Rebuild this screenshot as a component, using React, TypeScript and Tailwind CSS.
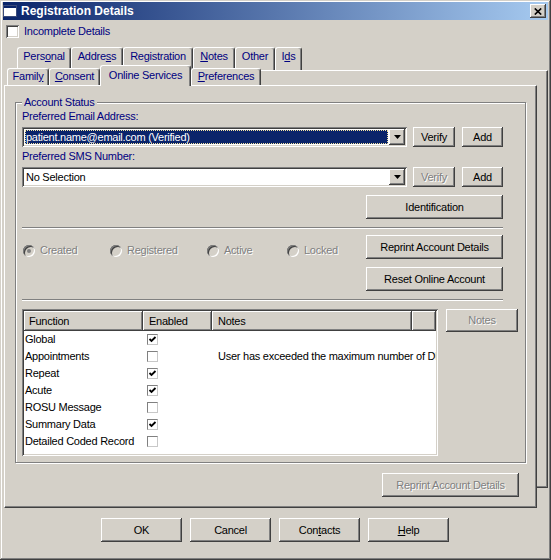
import React from 'react';

// classic 3D edges
const raised =
  'bg-[#d4d0c8] shadow-[inset_-1px_-1px_#404040,inset_1px_1px_#ffffff,inset_-2px_-2px_#808080,inset_2px_2px_#d4d0c8]';
const sunken =
  'shadow-[inset_1px_1px_#808080,inset_-1px_-1px_#ffffff,inset_2px_2px_#404040,inset_-2px_-2px_#d4d0c8]';
const greyed = 'text-[#808080] [text-shadow:1px_1px_0_#ffffff]';
const navy = 'text-[#000080]';

interface BtnProps {
  className?: string;
  disabled?: boolean;
  children: React.ReactNode;
}

const Btn: React.FC<BtnProps> = ({ className = '', disabled = false, children }) => (
  <button
    type="button"
    className={`${raised} ${disabled ? greyed : 'text-black'} flex shrink-0 items-center justify-center text-[11px] leading-[13px] tracking-[-0.25px] ${className}`}
  >
    {children}
  </button>
);

const Arrow = () => (
  <svg width="7" height="4" viewBox="0 0 7 4">
    <path d="M0 0H7L3.5 4Z" fill="#000000" />
  </svg>
);

const Combo: React.FC<{ text: string; selected?: boolean }> = ({ text, selected }) => (
  <div className={`${sunken} bg-white w-[385px] h-[20px] p-[2px] flex shrink-0`}>
    <div className="flex-1 min-w-0 p-[1px]">
      {selected ? (
        <div className="h-full bg-[#0a246a] text-white outline-1 outline-dotted outline-[#f3e3a0] -outline-offset-1 pl-[1px] leading-[14px] whitespace-nowrap overflow-hidden">
          {text}
        </div>
      ) : (
        <div className="h-full text-black pl-[1px] leading-[14px] whitespace-nowrap">{text}</div>
      )}
    </div>
    <div className={`${raised} w-[16px] h-full flex items-center justify-center`}>
      <Arrow />
    </div>
  </div>
);

const Radio: React.FC<{ label: string; checked?: boolean; className: string }> = ({ label, checked, className }) => (
  <div className={`flex items-center h-[13px] shrink-0 ${className}`}>
    <div className="w-[12px] h-[12px] rounded-full bg-[#d4d0c8] shadow-[inset_1px_1px_#808080,inset_-1px_-1px_#ffffff,inset_2px_2px_#404040,inset_-2px_-2px_#d4d0c8] flex items-center justify-center shrink-0">
      {checked && <div className="w-[4px] h-[4px] rounded-full bg-[#808080]" />}
    </div>
    <span className={`ml-[5px] ${greyed}`}>{label}</span>
  </div>
);

const Separator = ({ className = '' }: { className?: string }) => (
  <div className={`h-[2px] border-t border-[#808080] border-b border-b-white ${className}`} />
);

const Tick = () => (
  <svg width="9" height="9" viewBox="0 0 9 9">
    <path d="M1.5 4 L3.5 6 L7.5 2" fill="none" stroke="#000000" strokeWidth="1.8" />
  </svg>
);

const rows: { name: string; on: boolean; note?: string }[] = [
  { name: 'Global', on: true },
  { name: 'Appointments', on: false, note: 'User has exceeded the maximum number of DNAs' },
  { name: 'Repeat', on: true },
  { name: 'Acute', on: true },
  { name: 'ROSU Message', on: false },
  { name: 'Summary Data', on: true },
  { name: 'Detailed Coded Record', on: false },
];

const tabBase =
  'flex justify-center rounded-t-[3px] border-t border-l border-white border-r border-r-[#404040] shadow-[inset_-1px_0_#808080] bg-[#d4d0c8] shrink-0';

export default function App() {
  return (
    <div className="relative w-[551px] h-[560px] overflow-hidden bg-[#d4d0c8] font-['Liberation_Sans',Arial,sans-serif] text-[11px] leading-[13px] tracking-[-0.25px] shadow-[inset_-1px_-1px_#404040,inset_1px_1px_#d4d0c8,inset_-2px_-2px_#808080,inset_2px_2px_#ffffff]">
      {/* Title bar */}
      <div className="mx-[3px] mt-[2px] h-[18px] flex items-center pr-[2px] bg-[linear-gradient(to_right,#0a246a,#a6caf0)]">
        <svg width="14" height="12" viewBox="0 0 14 12" className="shrink-0">
          <rect x="0" y="0" width="14" height="12" fill="#ffffff" />
          <rect x="0" y="0" width="14" height="3" fill="#0a246a" />
          <rect x="0.5" y="0.5" width="13" height="11" fill="none" stroke="#3a4a7a" />
        </svg>
        <span className="ml-[4px] text-white font-bold text-[12px] tracking-normal">Registration Details</span>
        <div className={`${raised} ml-auto w-[16px] h-[14px] flex items-center justify-center`}>
          <svg width="8" height="7" viewBox="0 0 8 7">
            <path d="M0.8 0.5 L7.2 6.5 M7.2 0.5 L0.8 6.5" stroke="#000000" strokeWidth="1.7" />
          </svg>
        </div>
      </div>

      {/* Incomplete details */}
      <div className="mt-[5px] ml-[6px] h-[13px] flex items-center">
        <div className={`${sunken} bg-white w-[13px] h-[13px]`} />
        <span className={`ml-[5px] ${navy}`}>Incomplete Details</span>
      </div>

      {/* Tab control */}
      <div className="relative mt-[9px]">
        {/* panel of the back tab row, mostly hidden */}
        <div className="absolute left-[8px] right-[3px] top-[23px] h-[418px] border border-t-white border-l-white border-r-[#404040] border-b-[#404040] shadow-[inset_-1px_-1px_#808080]" />

        <div className="flex ml-[17px] h-[23px]">
          <div className={`${tabBase} w-[54px] pt-[2px] ${navy}`}>Pers<span className="underline">o</span>nal</div>
          <div className={`${tabBase} w-[52px] pt-[2px] ${navy}`}>Addre<span className="underline">s</span>s</div>
          <div className={`${tabBase} w-[70px] pt-[2px] ${navy}`}>Registration</div>
          <div className={`${tabBase} w-[42px] pt-[2px] ${navy}`}><span className="underline">N</span>otes</div>
          <div className={`${tabBase} w-[40px] pt-[2px] ${navy}`}>Other</div>
          <div className={`${tabBase} w-[27px] pt-[2px] ${navy}`}>I<span className="underline">d</span>s</div>
        </div>

        <div className="relative z-20 flex items-end ml-[7px] -mt-[2px] h-[17px]">
          <div className={`${tabBase} w-[42px] h-[17px] pt-[1px] ${navy}`}>Famil<span className="underline">y</span></div>
          <div className={`${tabBase} w-[51px] h-[17px] pt-[1px] ${navy}`}><span className="underline">C</span>onsent</div>
          <div className={`${tabBase} w-[91px] h-[21px] -mb-[1px] pt-[3px] ${navy}`}>Online Services</div>
          <div className={`${tabBase} w-[70px] h-[17px] pt-[1px] ${navy}`}><span className="underline">P</span>references</div>
        </div>

        {/* Active panel */}
        <div className="relative z-10 ml-[4px] w-[533px] h-[423px] bg-[#d4d0c8] border border-t-white border-l-white border-r-[#404040] border-b-[#404040] shadow-[inset_-1px_-1px_#808080] pl-[10px] pt-[16px]">
          <div className="relative w-[511px] h-[361px] border border-[#808080] shadow-[inset_1px_1px_#ffffff,1px_1px_#ffffff] pl-[6px] pr-[22px] pt-[7px]">
            <span className={`absolute -top-[7px] left-[6px] px-[2px] bg-[#d4d0c8] ${navy}`}>Account Status</span>

            <div className={`h-[13px] ${navy}`}>Preferred Email Address:</div>
            <div className="mt-[4px] h-[20px] flex">
              <Combo text="patient.name@email.com (Verified)" selected />
              <Btn className="ml-[6px] w-[42px] h-[20px]">Verify</Btn>
              <Btn className="ml-[7px] w-[41px] h-[20px]">Add</Btn>
            </div>

            <div className={`mt-[3px] h-[13px] ${navy}`}>Preferred SMS Number:</div>
            <div className="mt-[4px] h-[20px] flex">
              <Combo text="No Selection" />
              <Btn className="ml-[6px] w-[42px] h-[20px]" disabled>Verify</Btn>
              <Btn className="ml-[7px] w-[41px] h-[20px]">Add</Btn>
            </div>

            <div className="mt-[8px] flex justify-end">
              <Btn className="w-[137px] h-[24px]">Identification</Btn>
            </div>

            <Separator className="mt-[8px]" />

            <div className="mt-[6px] flex">
              <div className="flex-1 flex pl-[1px] pt-[9px]">
                <Radio label="Created" checked className="w-[87px]" />
                <Radio label="Registered" className="w-[97px]" />
                <Radio label="Active" className="w-[80px]" />
                <Radio label="Locked" className="w-[60px]" />
              </div>
              <div className="flex flex-col gap-[8px]">
                <Btn className="w-[137px] h-[24px]">Reprint Account Details</Btn>
                <Btn className="w-[137px] h-[24px]">Reset Online Account</Btn>
              </div>
            </div>

            <Separator className="mt-[8px]" />

            <div className="mt-[8px] flex items-start">
              <div className={`${sunken} bg-white w-[416px] h-[147px] p-[2px] shrink-0`}>
                <div className="h-full overflow-hidden text-black">
                  <div className="flex h-[20px]">
                    <div className={`${raised} w-[119px] h-full pl-[5px] flex items-center`}>Function</div>
                    <div className={`${raised} w-[69px] h-full pl-[6px] flex items-center`}>Enabled</div>
                    <div className={`${raised} w-[200px] h-full pl-[6px] flex items-center`}>Notes</div>
                    <div className={`${raised} flex-1 h-full`} />
                  </div>
                  {rows.map((r) => (
                    <div key={r.name} className="flex h-[17px] items-center leading-[17px]">
                      <div className="w-[119px] pl-[1px] shrink-0 whitespace-nowrap">{r.name}</div>
                      <div className="w-[69px] pl-[4px] shrink-0 flex items-center">
                        <div className="w-[11px] h-[11px] bg-white border border-[#808080] border-r-[#c8c8c8] border-b-[#c8c8c8] flex items-center justify-center">
                          {r.on && <Tick />}
                        </div>
                      </div>
                      <div className="pl-[6px] whitespace-nowrap">{r.note ?? ''}</div>
                    </div>
                  ))}
                </div>
              </div>
              <Btn className="ml-[8px] w-[72px] h-[23px]" disabled>Notes</Btn>
            </div>
          </div>

          <Btn className="mt-[10px] ml-[367px] w-[137px] h-[24px]" disabled>Reprint Account Details</Btn>
        </div>
      </div>

      {/* Dialog buttons */}
      <div className="mt-[10px] ml-[101px] flex gap-[8px]">
        <Btn className="w-[81px] h-[24px]">OK</Btn>
        <Btn className="w-[81px] h-[24px]">Cancel</Btn>
        <Btn className="w-[81px] h-[24px]">Con<span className="underline">t</span>acts</Btn>
        <Btn className="w-[81px] h-[24px]"><span className="underline">H</span>elp</Btn>
      </div>
    </div>
  );
}
